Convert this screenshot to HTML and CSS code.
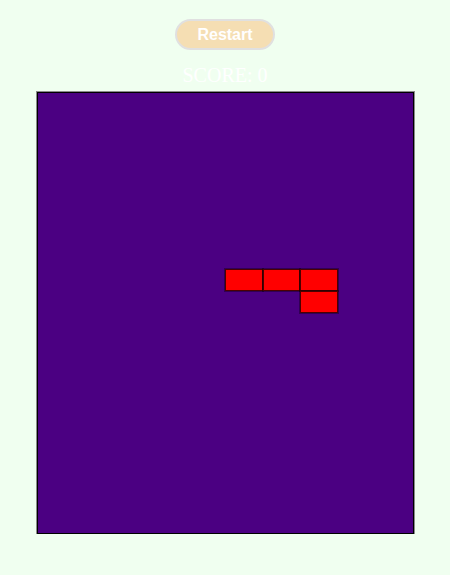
FILE: index.html
```html
<!DOCTYPE html>
<html>
<head>
<meta charset="utf-8">
<link rel="stylesheet" href="styles.css">
</head>
<body>
<main class="game">
  <button class="restart">Restart</button>
  <div class="score">SCORE: 0</div>
  <div class="board">
    <div class="cell" style="grid-column: 6; grid-row: 9;"></div>
    <div class="cell" style="grid-column: 7; grid-row: 9;"></div>
    <div class="cell" style="grid-column: 8; grid-row: 9;"></div>
    <div class="cell" style="grid-column: 8; grid-row: 10;"></div>
  </div>
</main>
</body>
</html>
```
FILE: styles.css
```css
html, body {
  margin: 0;
  padding: 0;
  background: #f0fff0;
}
.game {
  display: flex;
  flex-direction: column;
  align-items: center;
  padding-top: 19px;
}
.restart {
  box-sizing: border-box;
  width: 100px;
  height: 31px;
  padding: 1px 0 0;
  border: 2px solid #e0e0e0;
  border-radius: 16px;
  background: #f5deb3;
  color: #ffffff;
  font-family: "Liberation Sans", Arial, sans-serif;
  font-weight: bold;
  font-size: 16px;
  line-height: 26px;
}
.score {
  margin-top: 14px;
  font-family: "Liberation Serif", "Times New Roman", serif;
  font-size: 20px;
  line-height: 23px;
  color: #ffffff;
}
.board {
  margin-top: 5px;
  width: 375px;
  height: 440px;
  background: #4b0082;
  border: 1px solid #000;
  box-shadow: 0 0 0 1px #8a8a8a;
  display: grid;
  grid-template-columns: repeat(10, 1fr);
  grid-template-rows: repeat(20, 1fr);
}
.cell {
  box-sizing: border-box;
  background: #ff0000;
  border: 1px solid rgba(0, 0, 0, 0.7);
  box-shadow: 0 0 0 1px rgba(0, 0, 0, 0.35);
}
```
